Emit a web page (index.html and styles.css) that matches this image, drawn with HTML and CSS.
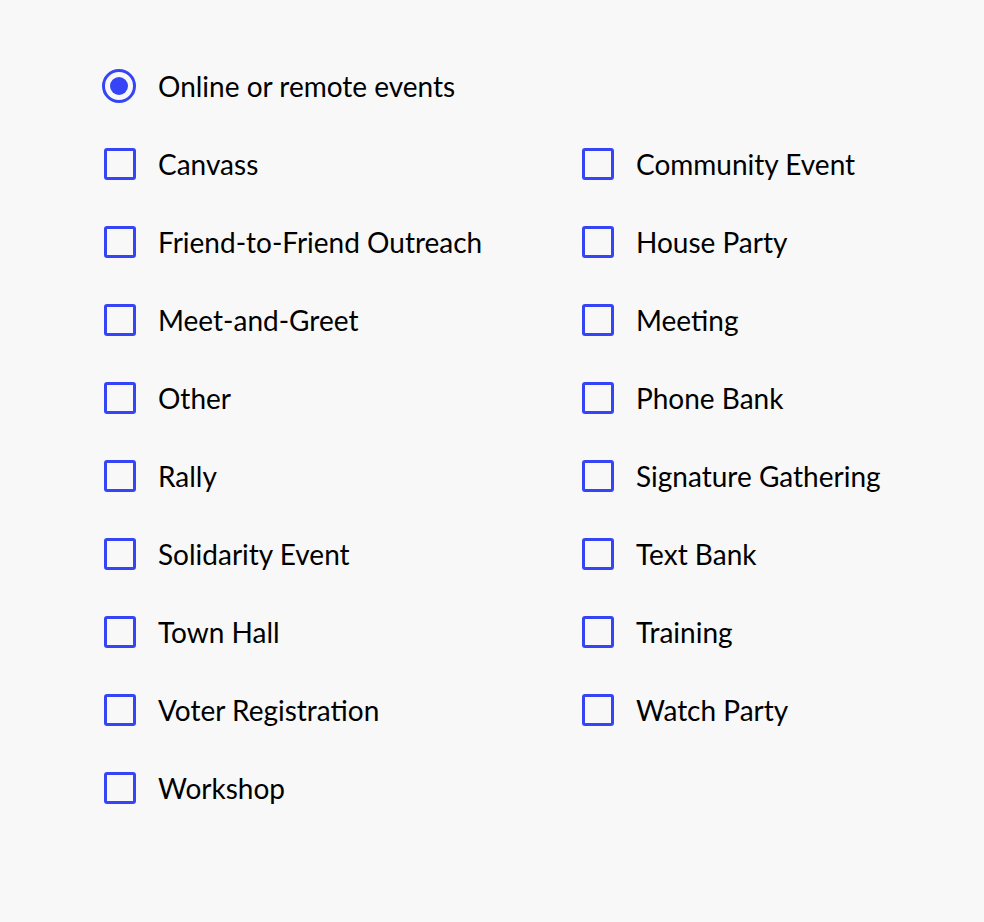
FILE: index.html
```html
<!DOCTYPE html>
<html lang="en">
<head>
    <meta charset="UTF-8">
    <title>Event types</title>
    <link rel="stylesheet" href="styles.css">
</head>
<body>

    <!-- Event type filter -->
    <div class="filter">
        <label class="option">
            <span class="radio checked"></span>
            <span class="label">Online or remote events</span>
        </label>

        <div class="grid">
            <label class="option"><span class="box"></span><span class="label">Canvass</span></label>
            <label class="option"><span class="box"></span><span class="label">Community Event</span></label>
            <label class="option"><span class="box"></span><span class="label">Friend-to-Friend Outreach</span></label>
            <label class="option"><span class="box"></span><span class="label">House Party</span></label>
            <label class="option"><span class="box"></span><span class="label">Meet-and-Greet</span></label>
            <label class="option"><span class="box"></span><span class="label">Meeting</span></label>
            <label class="option"><span class="box"></span><span class="label">Other</span></label>
            <label class="option"><span class="box"></span><span class="label">Phone Bank</span></label>
            <label class="option"><span class="box"></span><span class="label">Rally</span></label>
            <label class="option"><span class="box"></span><span class="label">Signature Gathering</span></label>
            <label class="option"><span class="box"></span><span class="label">Solidarity Event</span></label>
            <label class="option"><span class="box"></span><span class="label">Text Bank</span></label>
            <label class="option"><span class="box"></span><span class="label">Town Hall</span></label>
            <label class="option"><span class="box"></span><span class="label">Training</span></label>
            <label class="option"><span class="box"></span><span class="label">Voter Registration</span></label>
            <label class="option"><span class="box"></span><span class="label">Watch Party</span></label>
            <label class="option"><span class="box"></span><span class="label">Workshop</span></label>
        </div>
    </div>

</body>
</html>
```

FILE: styles.css
```css
body {
    margin: 0;
    background-color: #f8f8f9;
    font-family: Lato, "Open Sans", sans-serif;
    color: #000;
}
.filter {
    padding: 47px 0 0 104px;
}
.option {
    display: flex;
    align-items: center;
    height: 78px;
    font-size: 28px;
    cursor: pointer;
}
.grid {
    display: grid;
    grid-template-columns: 478px 1fr;
}
.box {
    box-sizing: border-box;
    width: 32px;
    height: 32px;
    border: 3px solid #3545f5;
    border-radius: 3px;
    margin-right: 22px;
    flex-shrink: 0;
}
.radio {
    box-sizing: border-box;
    width: 34px;
    height: 34px;
    border: 3px solid #3545f5;
    border-radius: 50%;
    margin-left: -2px;
    margin-right: 22px;
    flex-shrink: 0;
    display: flex;
    align-items: center;
    justify-content: center;
}
.radio.checked::after {
    content: "";
    width: 18px;
    height: 18px;
    border-radius: 50%;
    background-color: #3545f5;
}
```
